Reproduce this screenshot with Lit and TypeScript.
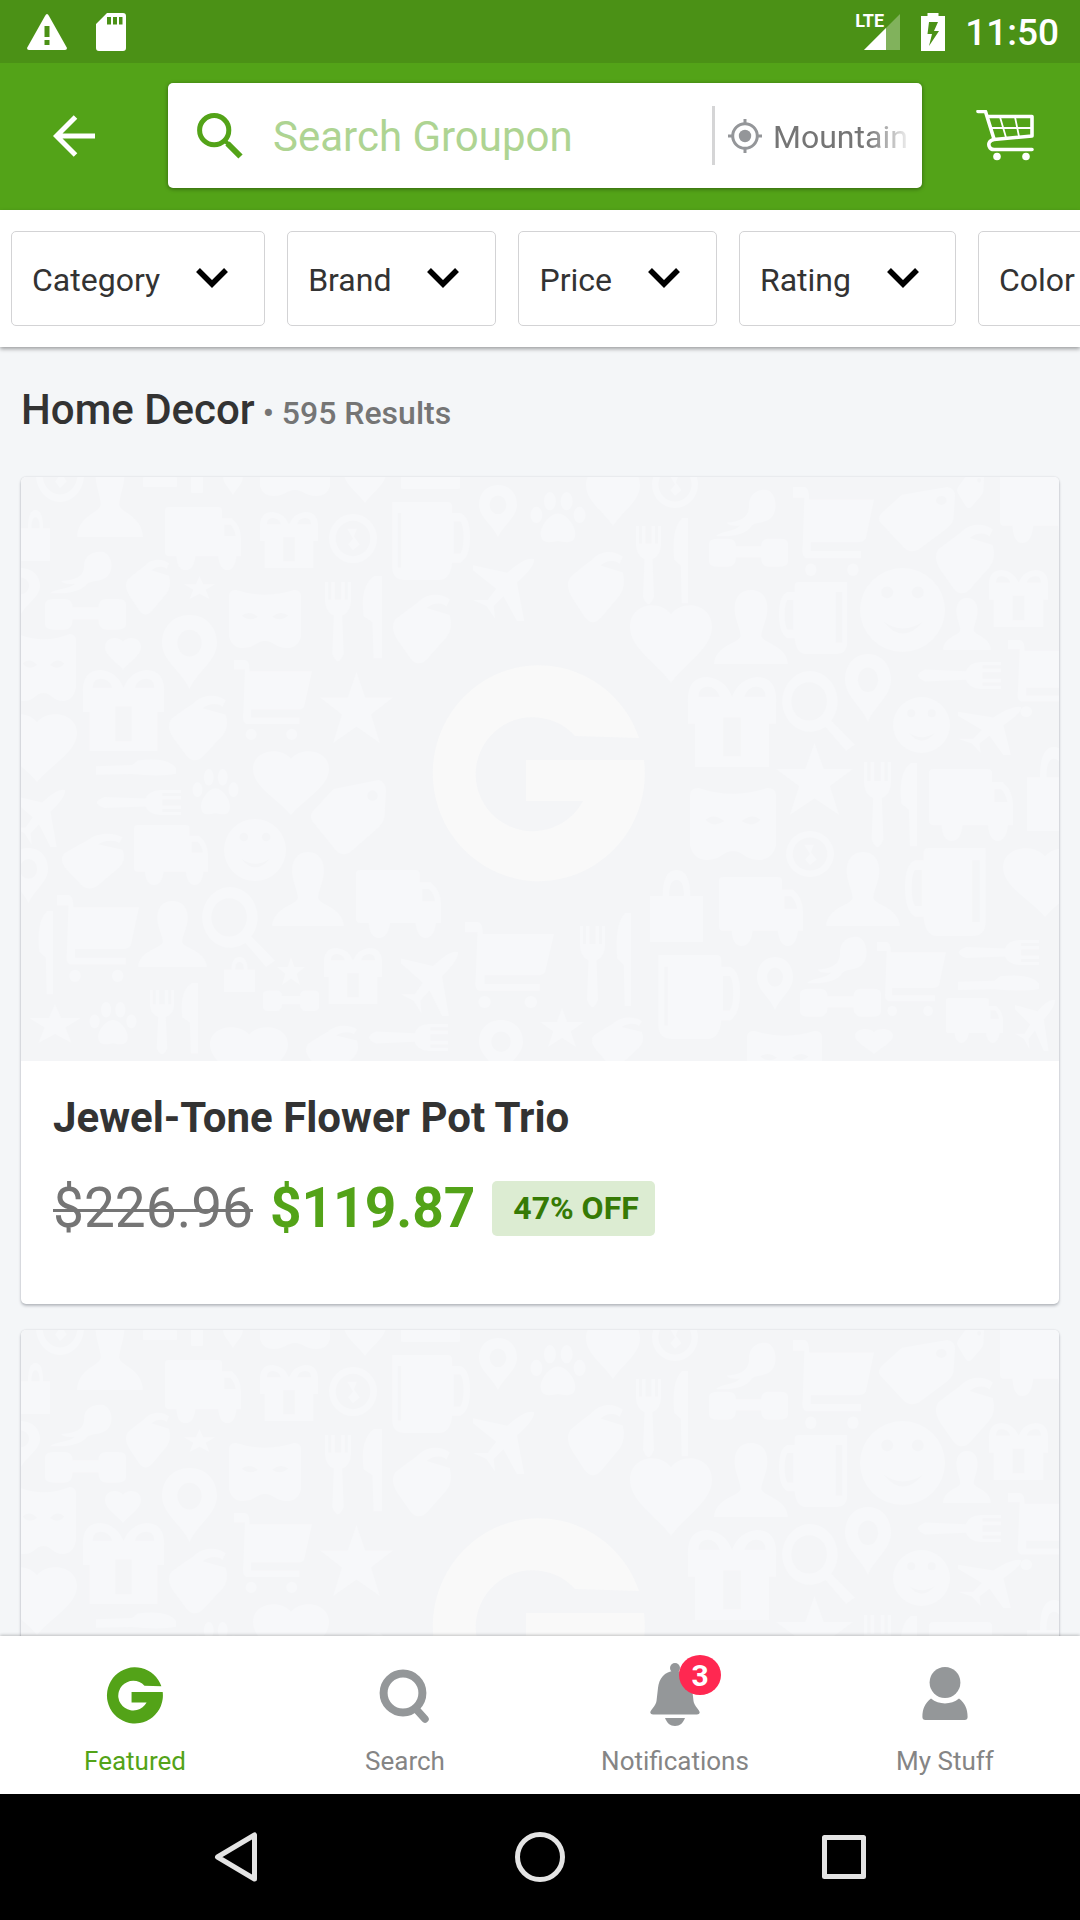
import { LitElement, html, css, svg } from "lit";
import { customElement, property, state } from "lit/decorators.js";
import { classMap } from "lit/directives/class-map.js";

type Glyph =
  | "person" | "truck" | "gift" | "coin" | "mug" | "pin" | "paw" | "dryer" | "mitt" | "star"
  | "dumbbell" | "mask" | "fork" | "knife" | "plane" | "heart" | "cart" | "forkH" | "knifeH"
  | "tag" | "smile" | "magnifier" | "bag" | "mugL" | "bar";

/** Silhouettes drawn on a 100 x 100 grid. */
const GLYPHS: Record<Glyph, unknown> = {
  person: svg`<path d="M50 0C66 0 73 12 72 28C71 42 65 50 64 62C66 72 98 74 100 100H0C2 74 34 72 36 62C35 50 29 42 28 28C27 12 34 0 50 0Z"/>`,
  truck: svg`<path fill-rule="evenodd" d="M5 0H70Q75 0 75 5V18H88Q100 30 100 50V78H94Q92 100 82 100T70 78H40Q38 100 27 100T15 78H5Q0 78 0 72V5Q0 0 5 0ZM78 28V46H93Q92 36 86 28Z"/>`,
  gift: svg`<path fill-rule="evenodd" d="M0 30Q-2 0 22 0Q42 2 50 22Q58 2 78 0Q102 0 100 30V52H92V100H8V52H0ZM12 22H36Q32 10 20 11Q12 12 12 22ZM64 22H88Q88 12 80 11Q68 10 64 22ZM40 45V88H60V45Z"/>`,
  coin: svg`<path fill-rule="evenodd" d="M50 0A50 50 0 1 1 50 100A50 50 0 1 1 50 0ZM50 14A36 36 0 1 0 50 86A36 36 0 1 0 50 14Z"/><path d="M38 30H58L52 46L64 62L50 74L40 62L50 50Z"/>`,
  mug: svg`<path fill-rule="evenodd" d="M4 0H72Q78 0 78 6V14H88Q100 18 100 45T88 78H78Q76 100 62 100H20Q4 100 4 84ZM11 14V84H15V14ZM80 25V66H88Q92 60 92 45T88 25Z"/>`,
  mugL: svg`<path fill-rule="evenodd" d="M96 0H28Q22 0 22 6V14H12Q0 18 0 45T12 78H22Q24 100 38 100H80Q96 100 96 84ZM89 14V84H80V14ZM20 25V66H12Q8 60 8 45T12 25Z"/>`,
  pin: svg`<path fill-rule="evenodd" d="M50 0C80 0 100 16 100 38C100 62 65 76 50 100C35 76 0 62 0 38C0 16 20 0 50 0ZM50 20A22 18 0 1 0 50 56A22 18 0 1 0 50 20Z"/>`,
  paw: svg`<ellipse cx="35" cy="18" rx="11" ry="18"/><ellipse cx="66" cy="18" rx="11" ry="18"/><ellipse cx="10" cy="45" rx="11" ry="16"/><ellipse cx="90" cy="45" rx="11" ry="16"/><path d="M50 42C66 42 84 68 82 84C80 104 62 98 50 96C38 98 20 104 18 84C16 68 34 42 50 42Z"/>`,
  dryer: svg`<path d="M55 35C55 5 75 0 85 2C102 8 104 50 90 62C80 72 66 68 60 76C50 96 25 100 0 98C10 86 30 90 40 76C28 78 20 76 18 70C40 68 55 60 55 35Z"/>`,
  mitt: svg`<path d="M40 14C60 -4 85 0 98 8L92 18C86 12 70 12 58 20L98 30Q104 50 92 62L60 92Q44 106 30 92L8 66Q-6 48 4 36L26 22Z"/>`,
  star: svg`<path d="M50 0L62 36H100L70 60L82 100L50 77L18 100L30 60L0 36H38Z"/>`,
  dumbbell: svg`<path d="M0 22Q0 6 12 6H24Q34 6 34 30H66Q66 6 76 6H90Q100 6 100 22V80Q100 96 88 96H76Q66 96 66 66H34Q34 96 24 96H12Q0 96 0 80Z"/>`,
  mask: svg`<path fill-rule="evenodd" d="M0 10Q0 0 10 0Q50 16 90 0Q100 0 100 10V80Q96 100 80 100C64 100 62 88 50 88S36 100 20 100Q4 100 0 80ZM18 44Q28 34 40 46Q28 56 18 44ZM60 46Q72 34 82 44Q72 56 60 46Z"/>`,
  fork: svg`<path d="M0 0H12V22H24V0H38V22H62V0H76V22H88V0H100V24Q98 38 66 42L72 90Q50 108 28 90L34 42Q2 38 0 24Z"/>`,
  knife: svg`<path d="M100 0V98H58L52 55L8 48Q-12 12 60 0Z"/>`,
  forkH: svg`<path d="M100 0V12H78V24H100V38H78V62H100V76H78V88H100V100H76Q62 98 58 66L10 72Q-8 50 10 28L58 34Q62 2 76 0Z"/>`,
  knifeH: svg`<path d="M0 40L45 34L52 8Q90 -12 100 50V82Q80 100 45 84L0 88Z"/>`,
  plane: svg`<path d="M100 0Q102 12 72 38L84 100H72L50 60L34 76L36 96L22 76L0 66H24L38 48L0 18V10L56 22Q86 -4 100 0Z"/>`,
  heart: svg`<path d="M50 12C64 -8 100 -2 100 28C100 56 68 74 50 100C32 74 0 56 0 28C0 -2 36 -8 50 12Z"/>`,
  cart: svg`<path d="M0 0H14Q20 0 20 14H100L90 58Q88 62 80 62H22V72H84V80H16Q10 78 12 66L14 12H0Z"/><circle cx="22" cy="93" r="7"/><circle cx="74" cy="93" r="7"/>`,
  tag: svg`<path fill-rule="evenodd" d="M30 12L90 0Q100 2 100 14L98 50Q96 60 86 68L52 98Q40 104 32 94L2 56Q-4 48 6 38ZM82 14A6 6 0 1 0 82 28A6 6 0 1 0 82 14Z"/>`,
  smile: svg`<path fill-rule="evenodd" d="M50 0A50 50 0 1 1 50 100A50 50 0 1 1 50 0ZM32 22A6 6 0 1 0 32 36A6 6 0 1 0 32 22ZM68 22A6 6 0 1 0 68 36A6 6 0 1 0 68 22ZM28 64Q50 92 74 64Q50 80 28 64Z"/>`,
  magnifier: svg`<path fill-rule="evenodd" d="M38 0A38 38 0 0 1 68 62L100 92L88 100L60 70A38 38 0 1 1 38 0ZM38 14A24 24 0 1 0 38 62A24 24 0 1 0 38 14Z"/>`,
  bag: svg`<path fill-rule="evenodd" d="M0 36H24Q24 0 50 0T76 36H100V100H0ZM36 36H64Q64 14 50 14T36 36Z"/>`,
  bar: svg`<rect width="100" height="100" rx="6"/>`,
};

/** Glyph, left, top, right, bottom in the 1038 x 584 placeholder artwork. */
const PATTERN: [Glyph, number, number, number, number][] = [
  ["coin", 15, -29, 63, 25], ["person", 56, -25, 122, 60], ["bar", 122, 0, 156, 10], ["bar", 170, -8, 182, 16],
  ["heart", 202, -8, 222, 18], ["mask", 239, -30, 309, 19], ["heart", 323, -16, 365, 26], ["bar", 380, -4, 439, 12],
  ["bag", 0, 33, 29, 84], ["truck", 144, 30, 220, 93], ["gift", 239, 35, 297, 91], ["coin", 308, 37, 356, 86],
  ["mug", 368, 25, 449, 103], ["pin", 458, 8, 496, 60], ["paw", 510, 15, 564, 66], ["dryer", 29, 74, 91, 117],
  ["mitt", 105, 82, 149, 138], ["star", 163, 99, 194, 122], ["dumbbell", 24, 120, 105, 154], ["mask", 208, 113, 280, 171],
  ["fork", 304, 105, 330, 185], ["knife", 341, 99, 361, 183], ["plane", 452, 82, 513, 144], ["mitt", 372, 117, 430, 187],
  ["pin", -20, 91, 19, 138], ["mask", -10, 157, 55, 224], ["heart", 84, 161, 120, 193], ["pin", 141, 138, 196, 212],
  ["gift", 62, 193, 143, 274], ["mitt", 148, 218, 206, 284], ["cart", 213, 183, 291, 263], ["star", 299, 195, 372, 266],
  ["heart", -24, 237, 56, 305], ["knifeH", 75, 282, 155, 300], ["forkH", 75, 313, 160, 338], ["paw", 172, 292, 217, 338],
  ["heart", 232, 274, 308, 338], ["tag", 290, 303, 365, 377], ["smile", 203, 342, 265, 404], ["person", 251, 375, 323, 449],
  ["truck", 335, 393, 420, 461], ["truck", 113, 348, 187, 408], ["mitt", 41, 356, 103, 412], ["plane", -8, 313, 44, 370],
  ["pin", -12, 371, 27, 426], ["knife", 17, 434, 32, 519], ["cart", 36, 418, 118, 505], ["person", 117, 424, 186, 490],
  ["magnifier", 180, 410, 254, 490], ["bag", 203, 480, 234, 515], ["star", 256, 480, 284, 508], ["dumbbell", 242, 512, 298, 535],
  ["gift", 303, 471, 361, 527], ["plane", 380, 475, 437, 539], ["cart", 444, 445, 533, 531], ["star", 8, 527, 60, 566],
  ["paw", 69, 525, 115, 568], ["fork", 129, 513, 153, 578], ["knife", 160, 506, 177, 578], ["heart", 189, 550, 267, 612],
  ["mitt", 285, 548, 337, 600], ["forkH", 347, 547, 427, 574], ["pin", 458, 543, 502, 600],
  ["heart", 565, -8, 619, 49], ["coin", 631, -16, 677, 31], ["fork", 615, 49, 640, 128], ["knife", 652, 41, 667, 128],
  ["dryer", 695, 12, 755, 60], ["dumbbell", 688, 60, 767, 91], ["cart", 772, 10, 853, 99], ["tag", 858, 10, 934, 74],
  ["tag", 936, -4, 963, 31], ["mitt", 915, 47, 973, 117], ["truck", 979, -12, 1062, 66], ["gift", 968, 93, 1027, 150],
  ["mitt", 547, 74, 603, 146], ["heart", 609, 128, 691, 206], ["person", 693, 113, 767, 187], ["mugL", 758, 105, 829, 177],
  ["smile", 839, 91, 924, 175], ["person", 922, 121, 970, 173], ["cart", 987, 163, 1070, 240], ["pin", 824, 177, 870, 245],
  ["forkH", 896, 185, 980, 212], ["gift", 667, 200, 755, 290], ["magnifier", 760, 194, 834, 274], ["smile", 872, 220, 929, 276],
  ["plane", 937, 230, 1000, 278], ["star", 755, 266, 832, 338], ["fork", 843, 285, 870, 371], ["knife", 879, 286, 896, 371],
  ["mask", 669, 311, 755, 383], ["coin", 765, 354, 813, 400], ["truck", 908, 292, 992, 364], ["bag", 1006, 270, 1060, 354],
  ["mugL", 884, 371, 968, 459], ["heart", 982, 371, 1066, 440], ["person", 805, 375, 879, 449], ["bag", 629, 393, 682, 465],
  ["truck", 698, 400, 782, 469], ["fork", 559, 449, 584, 531], ["knife", 595, 436, 610, 531], ["mug", 634, 478, 719, 562],
  ["pin", 736, 480, 772, 533], ["dryer", 786, 459, 846, 507], ["dumbbell", 779, 510, 860, 541], ["cart", 856, 465, 925, 539],
  ["forkH", 937, 463, 1018, 488], ["knifeH", 937, 498, 1018, 515], ["truck", 925, 521, 982, 566], ["plane", 994, 523, 1034, 574],
  ["star", 519, 531, 563, 570], ["mitt", 571, 540, 622, 590], ["mask", 726, 554, 801, 612], ["heart", 834, 552, 872, 577],
];

const G_MARK = "M206 74A106 108 0 1 0 211 96H93V137H150A57 57 0 1 1 142 72Z";

@customElement("deal-placeholder")
class DealPlaceholder extends LitElement {
  static styles = css`
    :host { display: block; background: #f4f5f7; aspect-ratio: 1038 / 584; overflow: hidden; }
    .art { display: block; width: 100%; height: 100%; }
    .shapes { fill: #f7f8fa; }
    .mark { fill: #f9f9f9; }
  `;
  render() {
    return html`<svg class="art" viewBox="0 0 1038 584" aria-hidden="true">
      <g class="shapes">
        ${PATTERN.map(([kind, l, t, r, b]) => svg`<g transform="translate(${l} ${t}) scale(${(r - l) / 100} ${(b - t) / 100})">${GLYPHS[kind]}</g>`)}
      </g>
      <path class="mark" transform="translate(412 187)" d=${G_MARK} />
    </svg>`;
  }
}

interface Deal { title: string; was: string; now: string; off: string; }

@customElement("deal-card")
class DealCard extends LitElement {
  @property({ attribute: false }) deal?: Deal;
  static styles = css`
    :host {
      display: block; flex: none; background: #fff; border-radius: 5px; overflow: hidden;
      box-shadow: 0 2px 3px rgba(40, 45, 60, 0.28), 0 0 2px rgba(40, 45, 60, 0.16);
    }
    .body { padding: 33px 32px 64px; display: flex; flex-direction: column; gap: 34px; }
    .title { margin: 0; font-size: 42px; line-height: 48px; font-weight: 700; color: #333; }
    .prices { display: flex; align-items: center; font-size: 55px; line-height: 64px; gap: 17px; }
    .was { color: #757575; text-decoration: line-through; text-decoration-thickness: 3px; }
    .now { color: #53a318; font-weight: 700; }
    .off {
      padding: 0 16px 0 21px; border-radius: 5px; background: #dcecd2; color: #367a05;
      font-size: 32px; line-height: 55px; font-weight: 700;
    }
  `;
  render() {
    const d = this.deal;
    return html`
      <deal-placeholder></deal-placeholder>
      ${d ? html`<div class="body">
        <h2 class="title">${d.title}</h2>
        <div class="prices"><s class="was">${d.was}</s><span class="now">${d.now}</span><span class="off">${d.off}</span></div>
      </div>` : null}
    `;
  }
}

const TAB_ICONS: Record<string, unknown> = {
  Featured: svg`<path transform="translate(4 4) scale(0.264 0.26)" d=${G_MARK} />`,
  Search: svg`<circle cx="30" cy="30" r="19.4" fill="none" stroke="currentColor" stroke-width="8"/><path d="M43 46L52 56" fill="none" stroke="currentColor" stroke-width="7.5" stroke-linecap="round"/>`,
  Notifications: svg`<circle cx="32" cy="5" r="5"/><path d="M32 8C21 8 16 16 15 25L13.5 38C13 43 7 47 7.3 49.7Q7.6 51.5 10 51.5H54Q56.4 51.5 56.7 49.7C57 47 51 43 50.5 38L49 25C48 16 43 8 32 8Z"/><path d="M22 55H42C40 60 37 63 32 63S24 60 22 55Z"/>`,
  "My Stuff": svg`<circle cx="32" cy="19.5" r="15.4"/><path d="M18 35.5C12 40 9.4 46 9.4 54Q9.4 57 12.4 57H51.6Q54.6 57 54.6 54C54.6 46 52 40 46 35.5C38 42 26 42 18 35.5Z"/>`,
};

@customElement("app-root")
class AppRoot extends LitElement {
  @state() private tab = "Featured";

  private filters = ["Category", "Brand", "Price", "Rating", "Color"];
  private deals: Deal[] = [{ title: "Jewel-Tone Flower Pot Trio", was: "$226.96", now: "$119.87", off: "47% OFF" }];

  static styles = css`
    :host {
      display: flex; flex-direction: column; height: 100vh; overflow: hidden;
      background: #f4f6f8; font-family: Roboto, "Liberation Sans", sans-serif; color: #333;
    }
    button { font: inherit; color: inherit; background: none; border: 0; padding: 0; margin: 0; cursor: pointer; }
    svg { display: block; flex: none; }

    .status {
      display: flex; align-items: center; justify-content: space-between; flex: none;
      height: 63px; padding: 0 21px 0 27px; background: #4b9116; color: #fff;
    }
    .group { display: flex; align-items: center; gap: 28px; }
    .group.end { gap: 20px; }
    .signal { position: relative; }
    .lte {
      position: absolute; left: -9px; top: -3px; font-family: "Liberation Sans Narrow", Roboto, sans-serif;
      font-size: 18px; line-height: 20px; font-weight: 700;
    }
    .clock { font-size: 37px; line-height: 42px; font-weight: 500; padding-top: 3px; }

    .header { display: flex; align-items: stretch; flex: none; padding: 20px 0 22px; background: #53a318; color: #fff; }
    .back, .basket { display: flex; align-items: center; justify-content: center; }
    .back { width: 148px; margin-right: 20px; }
    .basket { width: 150px; margin-left: 8px; }
    .search {
      flex: 1; min-width: 0; display: flex; align-items: center; height: 105px; background: #fff; border-radius: 5px;
      box-shadow: 0 1px 4px rgba(0, 0, 0, 0.4);
    }
    .field { flex: 1; min-width: 0; display: flex; align-items: center; gap: 30px; padding-left: 29px; color: #53a318; }
    .input { flex: 1; min-width: 0; border: 0; outline: 0; padding: 3px 0 0; background: none; font: inherit; font-size: 42px; line-height: 50px; color: #53a318; }
    .input::placeholder { color: #aed492; opacity: 1; }
    .place {
      display: flex; align-items: center; gap: 11px; width: 210px; height: 59px; border-left: 3px solid #d5d5d6;
      padding: 0 15px 0 13px; color: #949699;
    }
    .city {
      flex: 1; min-width: 0; overflow: hidden; text-align: left; white-space: nowrap; padding-top: 2px; font-size: 32px; line-height: 40px; color: #757575;
      -webkit-mask-image: linear-gradient(to right, #000 70%, transparent 105%);
      mask-image: linear-gradient(to right, #000 70%, transparent 105%);
    }

    .filters {
      display: flex; flex: none; gap: 22px; padding: 21px 11px; overflow: hidden; background: #fff;
      box-shadow: 0 2px 4px rgba(0, 0, 0, 0.36); z-index: 1;
    }
    .chip {
      display: flex; align-items: center; gap: 36px; flex: none; height: 95px; padding: 0 36px 0 20px;
      border: 1px solid #d3d3d5; border-radius: 5px; font-size: 32px; line-height: 40px;
    }
    .name { padding-top: 2px; }
    .chip svg { margin-bottom: 2px; }

    .results { flex: 1; min-height: 0; overflow: hidden; padding: 38px 21px 0; }
    .heading { display: flex; align-items: baseline; gap: 8px; margin: 0 0 42px; font-size: 42px; line-height: 50px; font-weight: 500; }
    .count { font-size: 32px; line-height: 40px; color: #757575; }
    .list { display: flex; flex-direction: column; gap: 26px; }

    .tabs { display: flex; flex: none; background: #fff; box-shadow: 0 -1px 3px rgba(0, 0, 0, 0.22); z-index: 1; }
    .tab {
      flex: 1; display: flex; flex-direction: column; align-items: center; gap: 18px; padding: 27px 0 17px;
      font-size: 26px; line-height: 32px; color: #858585;
    }
    .tab.active { color: #53a318; }
    .tab.active .glyph { color: #53a318; }
    .glyph { position: relative; color: #949799; }
    .badge {
      position: absolute; left: 36px; top: -8px; width: 42px; height: 40px; border-radius: 50%;
      background: #ff2851; color: #fff; font-size: 30px; line-height: 42px; font-weight: 700; text-align: center;
    }

    .system { display: flex; flex: none; align-items: center; justify-content: center; gap: 254px; height: 126px; background: #000; color: #e4e4e4; }
  `;

  render() {
    return html`
      <div class="status">
        <div class="group">
          <svg width="40" height="36" viewBox="0 0 40 36" fill="#fff" aria-label="Warning">
            <path fill-rule="evenodd" d="M20 0Q21 0 22 2L40 34Q40 36 38 36H2Q0 36 0 34L18 2Q19 0 20 0ZM17.500 12V23H22.500V12ZM17.500 26V31H22.500V26Z"/>
          </svg>
          <svg width="32" height="40" viewBox="0 0 32 40" fill="#fff" aria-label="Storage">
            <path fill-rule="evenodd" d="M12 1H28Q31 1 31 4V36Q31 39 28 39H4Q1 39 1 36V12ZM12 5V12.500H16V5ZM18 5V12.500H22V5ZM24 5V12.500H27.500V5Z"/>
          </svg>
        </div>
        <div class="group end">
          <div class="signal">
            <svg width="37" height="36" viewBox="0 0 37 36" fill="#fff" aria-hidden="true">
              <path opacity="0.3" d="M0 36L36 0V36Z"/><path d="M0 36L22 14V36Z"/>
            </svg>
            <span class="lte">LTE</span>
          </div>
          <svg width="24" height="38" viewBox="0 0 24 38" fill="#fff" aria-label="Battery charging">
            <path fill-rule="evenodd" d="M6.500 0H17.500V3H24V38H0V3H6.500ZM8 9L6.500 21H11L8 33L18 18H13L17 9Z"/>
          </svg>
          <span class="clock">11:50</span>
        </div>
      </div>

      <header class="header">
        <button class="back" aria-label="Back">
          <svg width="42" height="42" viewBox="0 0 42 42" fill="none" stroke="#fff" stroke-width="5"><path d="M22.500 2L3.500 21L22.500 40M4 21H42"/></svg>
        </button>
        <div class="search">
          <label class="field">
            <svg width="46" height="46" viewBox="0 0 46 46" fill="none" stroke="currentColor" aria-hidden="true">
              <circle cx="17.200" cy="17.200" r="14.600" stroke-width="5"/><path d="M28 28L32 31.500" stroke-width="4"/><path d="M30.500 30.500L43.500 43.500" stroke-width="6"/>
            </svg>
            <input class="input" type="text" placeholder="Search Groupon" aria-label="Search Groupon" />
          </label>
          <button class="place">
            <svg width="34" height="34" viewBox="0 0 34 34" fill="none" stroke="currentColor" stroke-width="3" aria-hidden="true">
              <circle cx="17" cy="17" r="12.300"/><circle cx="17" cy="17" r="6.200" fill="currentColor" stroke="none"/>
              <path d="M17 0V5M17 29V34M0 17H5M29 17H34"/>
            </svg>
            <span class="city">Mountain</span>
          </button>
        </div>
        <button class="basket" aria-label="Cart">
          <svg width="58" height="52" viewBox="0 1 58 52" fill="none" stroke="#fff" stroke-width="3.600" stroke-linecap="round" stroke-linejoin="round">
            <path d="M2 2.500H9.500L18 30M11.500 7.500H56V27L18 30.500C13 31.500 12 35 13.500 38Q14.500 40.500 18 40.500H56"/>
            <path stroke-width="1.800" d="M14 19H56M24 8L30 28.500M39 8L43 27.500"/>
            <circle cx="21" cy="47.500" r="3.800" fill="#fff" stroke="none"/><circle cx="50" cy="47.500" r="3.800" fill="#fff" stroke="none"/>
          </svg>
        </button>
      </header>

      <div class="filters">
        ${this.filters.map((name) => html`<button class="chip" aria-haspopup="listbox"><span class="name">${name}</span>
          <svg width="32" height="20" viewBox="0 0 32 20" fill="none" stroke="#000" stroke-width="5.500" aria-hidden="true"><path d="M2 2L16 16L30 2"/></svg>
        </button>`)}
      </div>

      <main class="results">
        <h1 class="heading">Home Decor <span class="count">• 595 Results</span></h1>
        <div class="list">
          ${this.deals.map((deal) => html`<deal-card .deal=${deal}></deal-card>`)}
          <deal-card></deal-card>
        </div>
      </main>

      <nav class="tabs">
        ${Object.keys(TAB_ICONS).map((name) => html`
          <button class=${classMap({ tab: true, active: this.tab === name })} @click=${() => (this.tab = name)}>
            <span class="glyph">
              <svg width="64" height="64" viewBox="0 0 64 64" fill="currentColor" aria-hidden="true">${TAB_ICONS[name]}</svg>
              ${name === "Notifications" ? html`<span class="badge">3</span>` : null}
            </span>
            ${name}
          </button>`)}
      </nav>

      <div class="system">
        <button aria-label="System back"><svg width="50" height="50" viewBox="0 0 50 50" fill="none" stroke="currentColor" stroke-width="5" stroke-linejoin="round"><path d="M43.500 3V47L6.500 25Z"/></svg></button>
        <button aria-label="Home"><svg width="50" height="50" viewBox="0 0 50 50" fill="none" stroke="currentColor" stroke-width="5"><circle cx="25" cy="25" r="22.500"/></svg></button>
        <button aria-label="Overview"><svg width="50" height="50" viewBox="0 0 50 50" fill="none" stroke="currentColor" stroke-width="5" stroke-linejoin="round"><rect x="5.500" y="5.500" width="39" height="39"/></svg></button>
      </div>
    `;
  }
}
